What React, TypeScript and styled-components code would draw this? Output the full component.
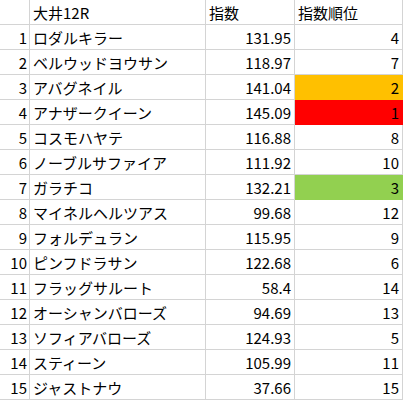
import React from 'react';
import styled, { createGlobalStyle } from 'styled-components';

const GlobalStyle = createGlobalStyle`
  html, body {
    margin: 0;
    padding: 0;
    background: #ffffff;
  }
  body {
    font-family: "Noto Sans CJK JP", "Noto Sans", sans-serif;
    color: #000000;
  }
`;

const Sheet = styled.div`
  display: grid;
  grid-template-columns: 30px 176px 89px 108px;
  grid-auto-rows: 25px;
  width: 403px;
`;

const Cell = styled.div<{ $align?: 'left' | 'right'; $fill?: string }>`
  box-sizing: border-box;
  border-right: 1px solid ${props => props.$fill || '#d4d4d4'};
  border-bottom: 1px solid ${props => props.$fill || '#d4d4d4'};
  background: ${props => props.$fill || 'transparent'};
  font-size: 15px;
  line-height: 24px;
  padding: 1px 3px 0 3px;
  text-align: ${props => props.$align || 'left'};
  white-space: nowrap;
  overflow: hidden;
`;

const RowNo = styled(Cell)`
  padding-right: 2px;
`;

type Horse = {
  name: string;
  index: string;
  rank: number;
};

const horses: Horse[] = [
  { name: 'ロダルキラー', index: '131.95', rank: 4 },
  { name: 'ベルウッドヨウサン', index: '118.97', rank: 7 },
  { name: 'アバグネイル', index: '141.04', rank: 2 },
  { name: 'アナザークイーン', index: '145.09', rank: 1 },
  { name: 'コスモハヤテ', index: '116.88', rank: 8 },
  { name: 'ノーブルサファイア', index: '111.92', rank: 10 },
  { name: 'ガラチコ', index: '132.21', rank: 3 },
  { name: 'マイネルヘルツアス', index: '99.68', rank: 12 },
  { name: 'フォルデュラン', index: '115.95', rank: 9 },
  { name: 'ピンフドラサン', index: '122.68', rank: 6 },
  { name: 'フラッグサルート', index: '58.4', rank: 14 },
  { name: 'オーシャンバローズ', index: '94.69', rank: 13 },
  { name: 'ソフィアバローズ', index: '124.93', rank: 5 },
  { name: 'スティーン', index: '105.99', rank: 11 },
  { name: 'ジャストナウ', index: '37.66', rank: 15 },
];

// top three ranks get a fill colour
const rankFill = (rank: number) => {
  if (rank === 1) return '#ff0000';
  if (rank === 2) return '#ffc000';
  if (rank === 3) return '#92d050';
  return undefined;
};

export default function App() {
  return (
    <>
      <GlobalStyle />
      <Sheet>
        <RowNo $align="right" />
        <Cell>大井12R</Cell>
        <Cell>指数</Cell>
        <Cell>指数順位</Cell>

        {horses.map((h, i) => (
          <React.Fragment key={h.name}>
            <RowNo $align="right">{i + 1}</RowNo>
            <Cell>{h.name}</Cell>
            <Cell $align="right">{h.index}</Cell>
            <Cell $align="right" $fill={rankFill(h.rank)}>
              {h.rank}
            </Cell>
          </React.Fragment>
        ))}
      </Sheet>
    </>
  );
}
